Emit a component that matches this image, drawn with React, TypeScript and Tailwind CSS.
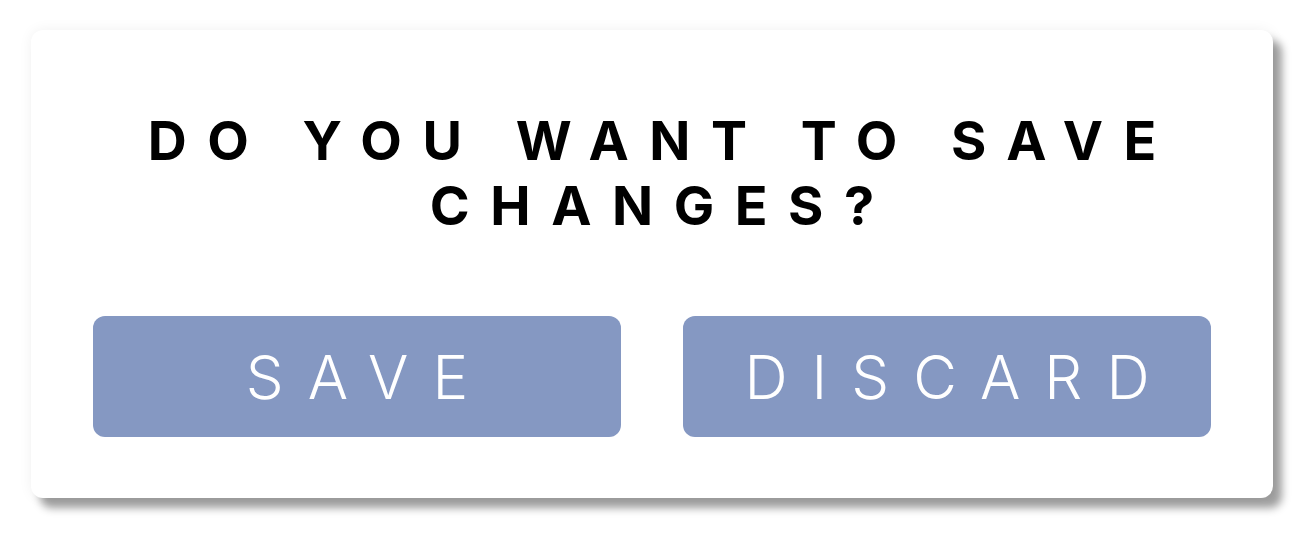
import React from 'react';

const App: React.FC = () => {
  return (
    <div className="w-[1315px] h-[540px] bg-white pt-[30px] pl-[31px]" style={{ fontFamily: 'Inter, "Noto Sans", sans-serif' }}>
      <div className="w-[1242px] h-[468px] bg-white rounded-[12px] shadow-[9px_10px_9px_rgba(0,0,0,0.38),0_0_14px_rgba(0,0,0,0.06)] flex flex-col items-center pt-[78px] px-[62px]">
        {/* Title */}
        <h1 className="text-[54px] leading-[65px] font-bold text-black text-center tracking-[0.38em] pl-[0.38em]">
          DO YOU WANT TO SAVE
          <br />
          CHANGES?
        </h1>

        {/* Actions */}
        <div className="mt-[78px] w-full flex gap-[62px]">
          <button className="flex-1 h-[121px] rounded-[12px] bg-[#8598c2] text-white text-[60px] font-light tracking-[0.4em] pl-[0.4em] flex items-center justify-center">
            SAVE
          </button>
          <button className="flex-1 h-[121px] rounded-[12px] bg-[#8598c2] text-white text-[60px] font-light tracking-[0.4em] pl-[0.4em] flex items-center justify-center">
            DISCARD
          </button>
        </div>
      </div>
    </div>
  );
};

export default App;
